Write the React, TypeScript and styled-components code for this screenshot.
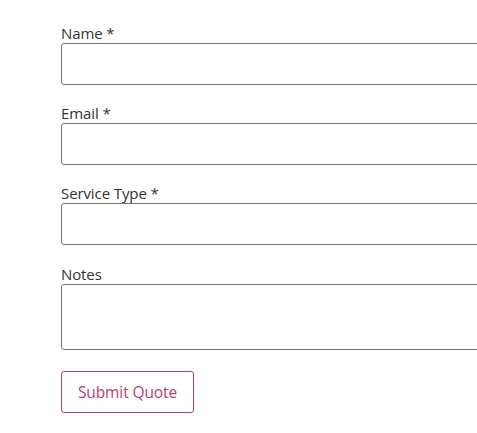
import styled, { createGlobalStyle } from 'styled-components';

const GlobalStyle = createGlobalStyle`
  body {
    margin: 0;
    background: #ffffff;
    font-family: "Open Sans", "Noto Sans", sans-serif;
  }
`;

const Page = styled.div`
  width: 100vw;
  height: 100vh;
  overflow: hidden;
`;

const Form = styled.form`
  display: flex;
  flex-direction: column;
  gap: 18.4px;
  padding: 22.6px 0 0 61px;
  width: 520px;
`;

const Field = styled.div`
  display: flex;
  flex-direction: column;
`;

const Label = styled.label`
  font-size: 15px;
  line-height: 20px;
  color: #333333;
  letter-spacing: -0.1px;
`;

const Input = styled.input`
  box-sizing: border-box;
  height: 42px;
  width: 100%;
  border: 1px solid #767676;
  border-radius: 3px;
  background: #ffffff;
  padding: 0 8px;
  font: inherit;
`;

const TextArea = styled.textarea`
  box-sizing: border-box;
  height: 66px;
  width: 100%;
  border: 1px solid #767676;
  border-radius: 3px;
  background: #ffffff;
  padding: 8px;
  font: inherit;
  resize: none;
`;

const SubmitButton = styled.button`
  align-self: flex-start;
  box-sizing: border-box;
  width: 133px;
  height: 42px;
  margin-top: 2.5px;
  border: 1px solid #b83d6e;
  border-radius: 3px;
  background: #ffffff;
  color: #b83d6e;
  font-family: inherit;
  font-size: 15.5px;
  letter-spacing: -0.1px;
  cursor: pointer;
`;

export default function App() {
  return (
    <Page>
      <GlobalStyle />
      <Form onSubmit={(e) => e.preventDefault()}>
        <Field>
          <Label htmlFor="name">Name *</Label>
          <Input id="name" type="text" />
        </Field>
        <Field>
          <Label htmlFor="email">Email *</Label>
          <Input id="email" type="email" />
        </Field>
        <Field>
          <Label htmlFor="service">Service Type *</Label>
          <Input id="service" type="text" />
        </Field>
        <Field>
          <Label htmlFor="notes">Notes</Label>
          <TextArea id="notes" />
        </Field>
        <SubmitButton type="submit">Submit Quote</SubmitButton>
      </Form>
    </Page>
  );
}
